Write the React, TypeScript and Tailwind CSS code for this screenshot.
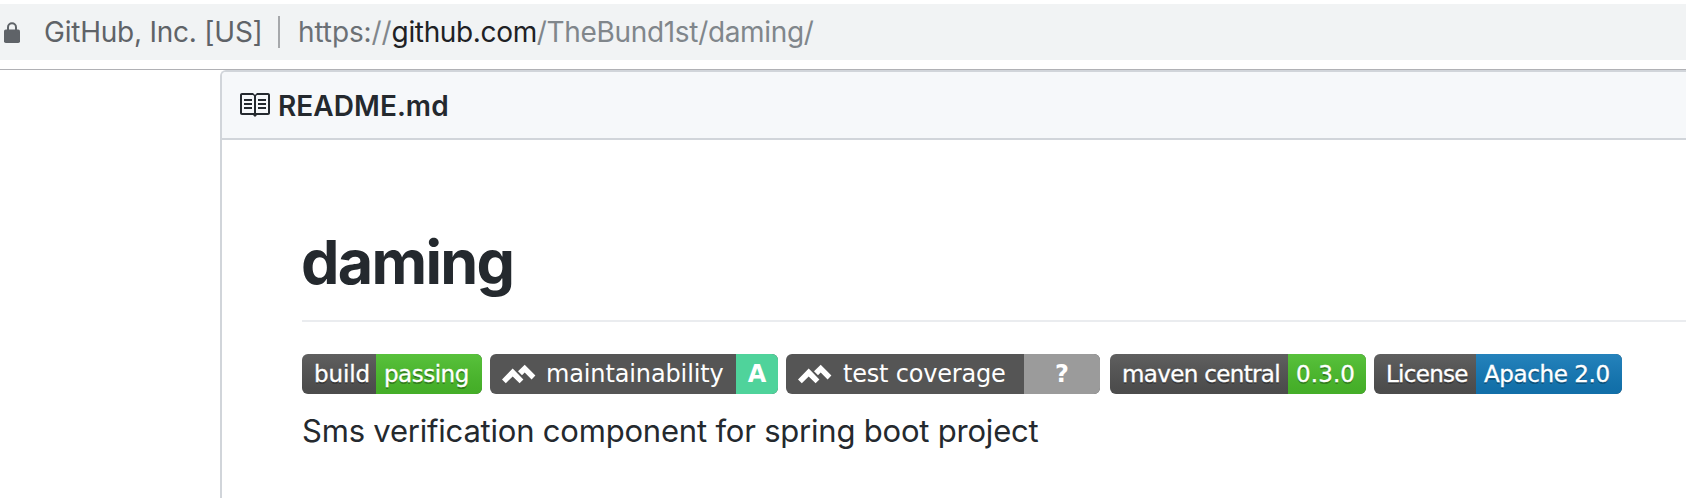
import type { ReactNode } from "react";

function LockIcon() {
  return (
    <svg className="absolute left-[4px] top-[18px] h-[21px] w-4" viewBox="0 0 16 21" fill="none">
      <path d="M4 9V5.2a4 4 0 0 1 8 0V9" stroke="#5f6368" strokeWidth="2" />
      <rect x="0" y="7.5" width="16" height="13.5" rx="1.8" fill="#5f6368" />
    </svg>
  );
}

function BookIcon() {
  return (
    <svg className="h-8 w-8 shrink-0" viewBox="0 0 16 16" fill="#24292e">
      <path
        fillRule="evenodd"
        d="M3 5h4v1H3V5zm0 3h4V7H3v1zm0 2h4V9H3v1zm11-5h-4v1h4V5zm0 2h-4v1h4V7zm0 2h-4v1h4V9zm2-6v9c0 .55-.45 1-1 1H9.5l-1 1-1-1H2c-.55 0-1-.45-1-1V3c0-.55.45-1 1-1h5.500l1 1 1-1H15c.55 0 1 .45 1 1zm-8 .5L7.500 3H2v9h6V3.500zm7-.5H9.500l-.5.5V12h6V3z"
      />
    </svg>
  );
}

function ClimateIcon() {
  return (
    <svg className="h-[20px] w-[34px] shrink-0" viewBox="0 0 34 20" fill="#fff">
      <path d="M0 15.400 10.700 4.600 21.400 15.600 17.600 19.200 10.700 12.400 3.800 19.200z" />
      <path d="M16 7.200 22.700 0.800 33.400 11.600 29.600 15.400 22.700 8.600 20 11.200z" />
    </svg>
  );
}

type BadgeProps = {
  className: string;
  labelClass: string;
  valueClass: string;
  label: ReactNode;
  value: string;
  glossy?: boolean;
};

function Badge({ className, labelClass, valueClass, label, value, glossy }: BadgeProps) {
  const finish = glossy
    ? "text-[23px] [-webkit-text-stroke:0.3px_#fff] [text-shadow:0_2px_0_rgba(1,1,1,0.3)] bg-linear-to-b from-[#bbbbbb1a] to-[#0000001a]"
    : "text-[24px]";
  return (
    <div className={`flex h-10 shrink-0 overflow-hidden rounded-[6px] bg-[#555555] font-['DejaVu_Sans',Verdana,sans-serif] leading-10 whitespace-nowrap text-white ${className}`}>
      <div className={`flex shrink-0 items-center ${finish} ${labelClass}`}>{label}</div>
      <div className={`flex-1 ${valueClass}`}>
        <div className={`h-full w-full ${finish} ${glossy ? "pl-2" : "text-center font-bold"}`}>{value}</div>
      </div>
    </div>
  );
}

export default function App() {
  return (
    <div className="h-[498px] w-full overflow-hidden bg-white font-['Inter',sans-serif] text-[#24292e]">
      <header className="h-[70px] border-b border-[#b0b1b5] pt-1">
        <div className="relative flex h-14 items-center bg-[#f1f3f4] pl-[44px] text-[28px] leading-[56px] whitespace-nowrap">
          <LockIcon />
          <span className="w-[234px] tracking-[-0.23px] text-[#5f6368]">GitHub, Inc. [US]</span>
          <span className="-mt-px h-8 w-[2px] bg-[#a6a8ab]" />
          <span className="ml-[18px] text-[#80868b]">
            <span className="tracking-[-0.1px] text-[#6b7075]">https:</span>
            <span className="tracking-[-0.1px]">//</span>
            <span className="tracking-[-0.35px] text-[#202124]">github.com</span>
            <span className="tracking-[-0.33px]">/TheBund1st/daming/</span>
          </span>
        </div>
      </header>

      <main className="ml-[220px] h-[440px] rounded-tl-[6px] border-t-2 border-l-2 border-[#d1d5da]">
        <div className="flex h-[68px] items-center rounded-tl-[4px] border-b-2 border-[#d1d5da] bg-[#f6f8fa] pl-4">
          <BookIcon />
          <h3 className="ml-2 pt-px text-[28px] leading-[42px] font-semibold tracking-[0.05px]">README.md</h3>
        </div>
        <article className="pt-[82px] pl-20">
          <h1 className="h-[100px] border-b-2 border-[#eaecef] pl-px text-[61px] leading-20 font-bold tracking-[-1.7px] [text-indent:-2px]">
            daming
          </h1>
          <div className="mt-8 flex">
            <Badge
              glossy
              className="w-[180px]"
              labelClass="w-[74px] pl-3 tracking-[-0.1px]"
              valueClass="bg-[#4dc22d] tracking-[-0.5px]"
              label="build"
              value="passing"
            />
            <Badge
              className="ml-2 w-[288px]"
              labelClass="w-[246px] pl-3 tracking-[-0.13px]"
              valueClass="bg-[#4fd39b]"
              label={<><ClimateIcon /><span className="ml-[10px]">maintainability</span></>}
              value="A"
            />
            <Badge
              className="ml-2 w-[314px]"
              labelClass="w-[238px] pl-3 tracking-[-0.2px]"
              valueClass="bg-[#9b9b9b]"
              label={<><ClimateIcon /><span className="ml-[11px]">test coverage</span></>}
              value="?"
            />
            <Badge
              glossy
              className="ml-[10px] w-[256px]"
              labelClass="w-[178px] pl-3 tracking-[-0.65px]"
              valueClass="bg-[#4dc22d] tracking-[0.1px]"
              label="maven central"
              value="0.3.0"
            />
            <Badge
              glossy
              className="ml-2 w-[248px]"
              labelClass="w-[102px] pl-3 tracking-[-0.7px]"
              valueClass="bg-[#147cbc] tracking-[-0.4px]"
              label="License"
              value="Apache 2.0"
            />
          </div>
          <p className="mt-[13px] text-[31px] leading-[48px] tracking-[-0.205px] whitespace-nowrap">
            Sms verification component for spring boot project
          </p>
        </article>
      </main>
    </div>
  );
}
